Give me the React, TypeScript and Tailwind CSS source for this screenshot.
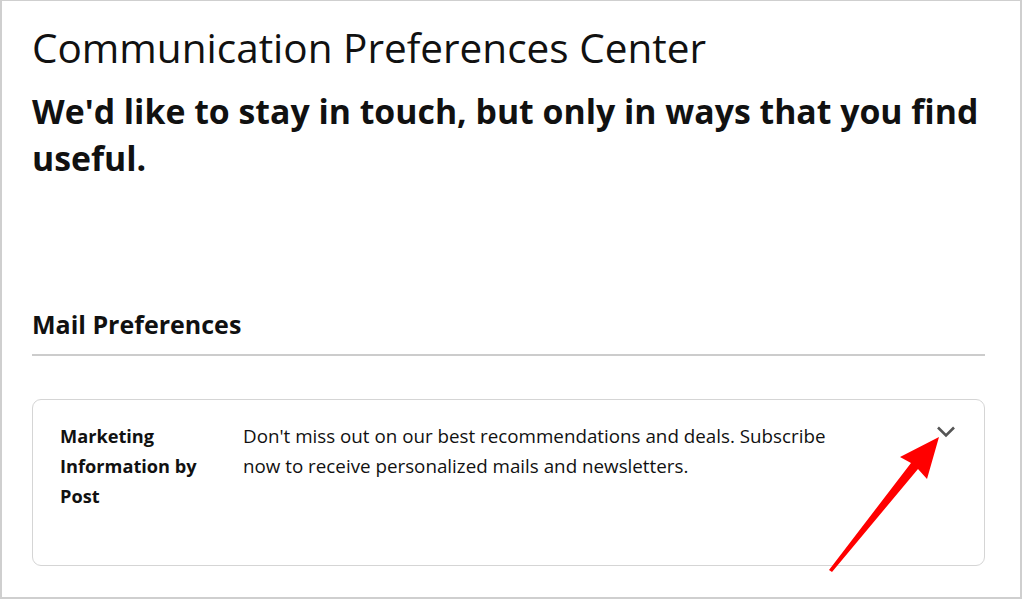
import React from 'react';

const font = { fontFamily: '"Open Sans", "Noto Sans", Arial, sans-serif' };

function Chevron() {
  return (
    <svg className="w-[20px] h-[14px] text-[#555]" viewBox="0 0 20 14" fill="none" stroke="currentColor" strokeWidth="2.6" strokeLinecap="butt" aria-hidden="true">
      <path d="M2 2.5 10 10.5 18 2.5" />
    </svg>
  );
}

function RedArrow() {
  return (
    <svg className="absolute left-0 top-0 pointer-events-none" width="1024" height="601" viewBox="0 0 1024 601" aria-hidden="true">
      <polygon points="939,437 927,479 918,469 832,572 829,570 911,463 900,457" fill="#ff0000" />
    </svg>
  );
}

export default function App() {
  return (
    <div className="relative w-[1024px] h-[601px] bg-white overflow-hidden" style={font}>
      <div className="w-[1022px] h-[599px] border-l-2 border-t border-r-2 border-b-2 border-[#cfcfcf] px-[30px] pt-[22px]">
        <h1 className="text-[40.5px] leading-[50px] text-[#111] font-normal">
          Communication Preferences Center
        </h1>
        <h2 className="mt-[15px] text-[33.8px] leading-[47px] font-bold text-[#111] w-[960px]">
          We'd like to stay in touch, but only in ways that you find useful.
        </h2>

        <div className="mt-[126px]">
          <h3 className="text-[25px] leading-[32px] font-bold text-[#111]">Mail Preferences</h3>
          <div className="mt-[14px] h-[2px] bg-[#cccccc] w-[953px]" />
        </div>

        <div className="mt-[43px] w-[953px] h-[167px] border border-[#d5d5d5] rounded-[9px] flex pl-[27px] pr-[28px] pt-[21px]">
          <div className="w-[183px] pr-[12px] text-[18.2px] leading-[30px] font-bold text-[#111]">
            Marketing Information by Post
          </div>
          <div className="w-[600px] text-[18.8px] leading-[30px] text-[#111]">
            Don't miss out on our best recommendations and deals. Subscribe now to receive personalized mails and newsletters.
          </div>
          <div className="flex-1 flex justify-end pt-[4px]">
            <Chevron />
          </div>
        </div>
      </div>
      <RedArrow />
    </div>
  );
}
